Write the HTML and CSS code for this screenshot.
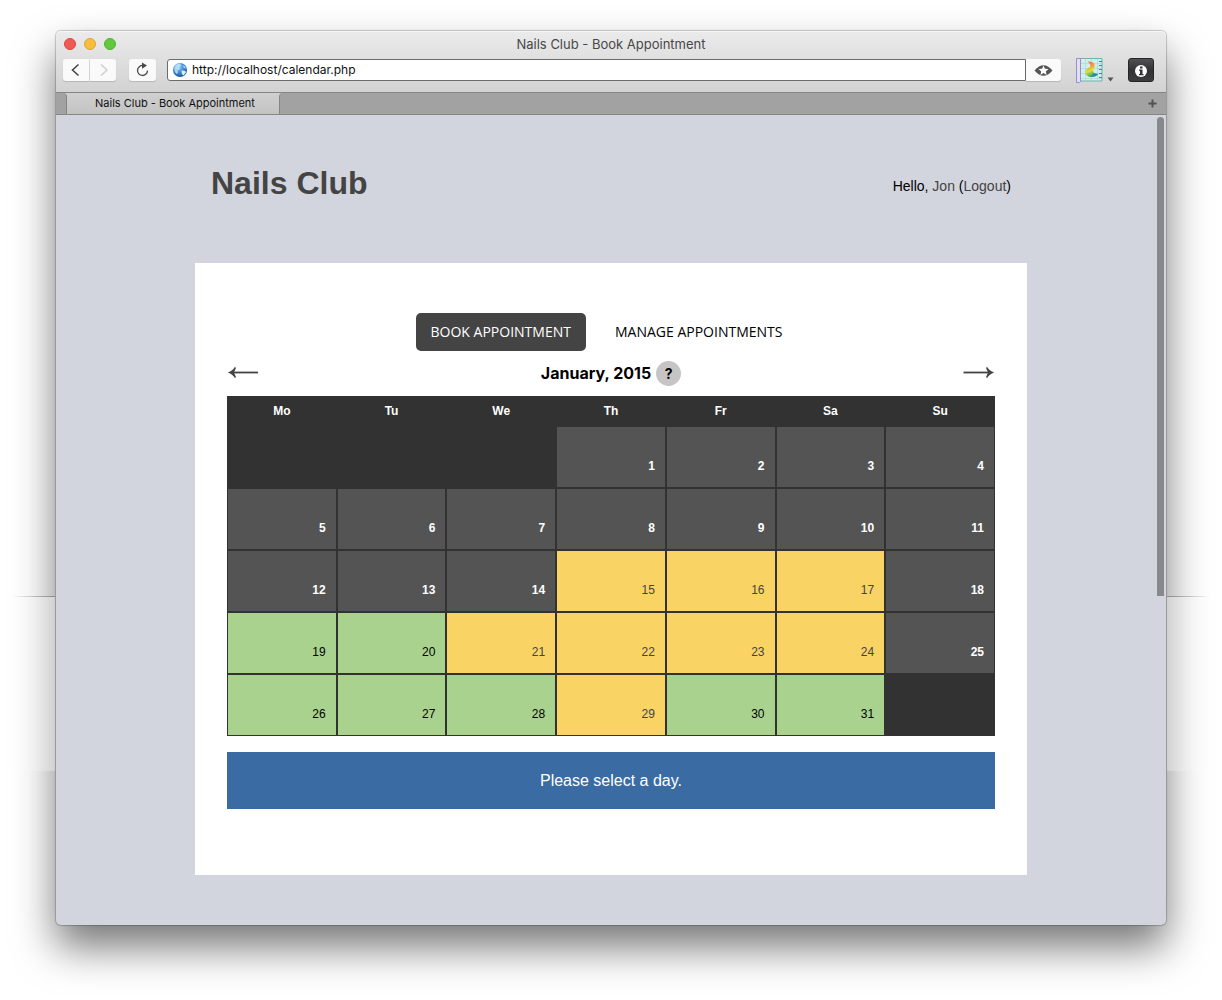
FILE: index.html
```html
<!DOCTYPE html>
<html lang="en">
<head>
<meta charset="utf-8">
<meta name="viewport" content="width=device-width, initial-scale=1">
<title>Nails Club - Book Appointment</title>
<link rel="stylesheet" href="styles.css">
</head>
<body>
<div class="desktop">
  <div class="seam seam-left"></div>
  <div class="seam seam-right"></div>
  <div class="window">
    <header class="chrome">
      <div class="titlebar">
        <div class="lights">
          <button class="light red" type="button" aria-label="Close"></button>
          <button class="light amber" type="button" aria-label="Minimize"></button>
          <button class="light green" type="button" aria-label="Zoom"></button>
        </div>
        <div class="window-title">Nails Club - Book Appointment</div>
      </div>
      <div class="toolbar">
        <div class="history">
          <button class="tool" type="button" aria-label="Back"><svg width="26" height="22" viewBox="0 0 26 22"><path d="M15.500 5.500L9.500 11l6 5.500" fill="none" stroke="#484848" stroke-width="1.600"/></svg></button>
          <button class="tool" type="button" aria-label="Forward"><svg width="26" height="22" viewBox="0 0 26 22"><path d="M11 5.500l6 5.500-6 5.500" fill="none" stroke="#cfcfcf" stroke-width="1.500"/></svg></button>
        </div>
        <button class="tool reload" type="button" aria-label="Reload"><svg width="27" height="22" viewBox="0 0 27 22"><path d="M14 6.500a5 5 0 1 0 4.500 5" fill="none" stroke="#484848" stroke-width="1.300"/><path d="M13 3.500l5 3-5 3.200z" fill="#484848"/></svg></button>
        <div class="address">
          <svg class="globe" width="16" height="16" viewBox="0 0 16 16"><defs><radialGradient id="sea" cx=".4" cy=".3" r=".75"><stop offset="0" stop-color="#8ecbf5"/><stop offset=".55" stop-color="#3a85d2"/><stop offset="1" stop-color="#174c93"/></radialGradient></defs><circle cx="8" cy="8" r="7" fill="url(#sea)"/><path d="M2.500 5C4 2 6 1.300 8 1.500l1.500 2L7.500 5 8 7 5.500 8.500 6 11l-1.500 1C3 10.500 1.800 8 2.500 5z" fill="#c4e5f8" opacity=".8"/><path d="M9.500 8.500l3.500.3 1 1.500L11.500 13.500 9.800 12z" fill="#d9f0fb"/><path d="M11 3l2 1.500.8 2-2-.5z" fill="#a9d7f4"/></svg>
          <input class="url" type="text" aria-label="Address" value="http://localhost/calendar.php">
        </div>
        <button class="tool watch" type="button" aria-label="Site preferences"><svg width="35" height="22" viewBox="0 0 35 22"><path d="M8.500 11.500Q17.500 1 26.500 11.500Q17.500 22 8.500 11.500z" fill="#555"/><path d="M17.500 6.500l1.400 3.300 3.600.3-2.700 2.300.8 3.600-3.100-1.900-3.100 1.900.8-3.600-2.700-2.300 3.600-.3z" fill="#fff"/></svg></button>
        <button class="palette" type="button" aria-label="Tools"><svg width="38" height="28" viewBox="0 0 38 28"><defs><linearGradient id="ink" x1="0" y1="0" x2=".3" y2="1"><stop offset="0" stop-color="#f0584f"/><stop offset=".4" stop-color="#f6a13b"/><stop offset=".65" stop-color="#d9e339"/><stop offset="1" stop-color="#3fa65d"/></linearGradient></defs><path d="M2 2.500h24v22.500H2z" fill="#d0eeea" stroke="#6fb3b1"/><path d="M5 7.500h20M5 12.500h20M5 17.500h20M5 22.500h20M9.500 3v22M15.500 3v22M21.500 3v22" stroke="#a5d6d3" stroke-width=".6"/><path d="M23 5.500h3M23 9.500h3M23 13.500h3M23 17.500h3M23 21.500h3" stroke="#4a838a"/><path d="M11.500 5.500c5-.5 8.500 2.500 7 6-1 2.200-2.500 3.500 0 5.500l3.500 1c-2.500 4-9.500 4-12 .5-2-3 .2-5.500 3-6.700 2.500-1.300 1.500-4.300-1.500-6.300z" fill="url(#ink)"/><path d="M16 20.700l1-3.200 5 .5c-1 1.800-3 2.700-6 2.700z" fill="#2586c4"/><path d="M.5 2.500h4v23l-1 1h-3z" fill="#e4ddf8" stroke="#9a8fc4"/><path d="M31.500 21.500h6l-3 4z" fill="#555"/></svg></button>
        <button class="info" type="button" aria-label="Page info"><svg width="26" height="24" viewBox="0 0 26 24"><circle cx="13" cy="13" r="6" fill="#fff"/><path d="M12 8.500h2.500v2H12zM11 11.500h3.500v4.500h1v1.200h-4.500V16h1v-3.200h-1z" fill="#333"/></svg></button>
      </div>
    </header>
    <nav class="tabstrip" aria-label="Browser tabs">
      <span class="tab-edge"></span>
      <a class="browser-tab" href="#top">Nails Club - Book Appointment</a>
      <div class="tab-rest"><button type="button" aria-label="New tab"><svg width="9" height="9" viewBox="0 0 9 9"><path d="M4.500 0.500v8M0.500 4.500h8" stroke="#525252" stroke-width="2"/></svg></button></div>
    </nav>
    <div class="viewport" id="top">
      <div class="scroll-thumb"></div>
      <div class="page">
        <header class="site-header">
          <h1>Nails Club</h1>
          <p class="greeting">Hello, <a href="#account">Jon</a> (<a href="#logout">Logout</a>)</p>
        </header>
        <main class="card">
          <nav class="sections" aria-label="Appointments">
            <a class="section current" href="#book">BOOK APPOINTMENT</a>
            <a class="section" href="#manage">MANAGE APPOINTMENTS</a>
          </nav>
          <div class="month-bar">
            <a href="#previous" aria-label="Previous month"><svg width="32" height="16" viewBox="0 0 32 16"><path d="M4 7.500h27" stroke="#444" stroke-width="1.800"/><path d="M0.800 7.500C4 6.500 6.500 4.500 7.800 2l1.200.8C8.500 4.500 7.600 6 6.800 7.500c.8 1.500 1.700 3 2.200 4.700l-1.200.8C6.500 10.500 4 8.500 .8 7.500z" fill="#444"/></svg></a>
            <div class="month"><h2>January, 2015</h2><button class="help" type="button" aria-label="Help">?</button></div>
            <a href="#next" aria-label="Next month"><svg width="32" height="16" viewBox="0 0 32 16"><path d="M0.500 7.500H28" stroke="#444" stroke-width="1.800"/><path d="M31.200 7.500C28 6.500 25.500 4.500 24.200 2l-1.200.8C23.500 4.500 24.400 6 25.200 7.500c-.8 1.500-1.700 3-2.200 4.700l1.200.8C25.500 10.500 28 8.500 31.200 7.500z" fill="#444"/></svg></a>
          </div>
          <table class="calendar">
            <thead><tr><th scope="col">Mo</th><th scope="col">Tu</th><th scope="col">We</th><th scope="col">Th</th><th scope="col">Fr</th><th scope="col">Sa</th><th scope="col">Su</th></tr></thead>
            <tbody>
              <tr><td></td><td></td><td></td><td class="past">1</td><td class="past">2</td><td class="past">3</td><td class="past">4</td></tr>
              <tr><td class="past">5</td><td class="past">6</td><td class="past">7</td><td class="past">8</td><td class="past">9</td><td class="past">10</td><td class="past">11</td></tr>
              <tr><td class="past">12</td><td class="past">13</td><td class="past">14</td><td class="busy"><a href="#15">15</a></td><td class="busy"><a href="#16">16</a></td><td class="busy"><a href="#17">17</a></td><td class="past">18</td></tr>
              <tr><td class="free"><a href="#19">19</a></td><td class="free"><a href="#20">20</a></td><td class="busy"><a href="#21">21</a></td><td class="busy"><a href="#22">22</a></td><td class="busy"><a href="#23">23</a></td><td class="busy"><a href="#24">24</a></td><td class="past">25</td></tr>
              <tr><td class="free"><a href="#26">26</a></td><td class="free"><a href="#27">27</a></td><td class="free"><a href="#28">28</a></td><td class="busy"><a href="#29">29</a></td><td class="free"><a href="#30">30</a></td><td class="free"><a href="#31">31</a></td><td></td></tr>
            </tbody>
          </table>
          <p class="notice">Please select a day.</p>
        </main>
      </div>
    </div>
  </div>
</div>
</body>
</html>
```
FILE: styles.css
```css
* { box-sizing: border-box; }
body { margin: 0; background: #fff; font-family: "Liberation Sans", Arial, sans-serif; color: #000; }
a { color: inherit; text-decoration: none; }
button { font: inherit; margin: 0; padding: 0; border: 0; background: none; }
svg { display: block; }

.desktop { position: relative; padding: 31px 56px 75px; overflow: hidden; }
.window {
  border-radius: 5px;
  background: #d2d5dd;
  box-shadow: 0 0 1px 1px rgba(0, 0, 0, .2), 0 22px 42px rgba(0, 0, 0, .54);
}

/* Break in the shadow on either side of the window */
.seam { position: absolute; z-index: 1; top: 596px; width: 42px; height: 175px; border-top: 1px solid; }
.seam-left {
  left: 13px;
  border-image: linear-gradient(to right, transparent, #888) 1;
  background: linear-gradient(to right, transparent, rgba(255, 255, 255, .3));
}
.seam-right {
  right: 13px;
  border-image: linear-gradient(to left, transparent, #888) 1;
  background: linear-gradient(to left, transparent, rgba(255, 255, 255, .3));
}

.chrome {
  padding: 0 12px 8px 7px;
  border-bottom: 1px solid #858585;
  border-radius: 5px 5px 0 0;
  background: linear-gradient(#ebebeb, #d2d2d2);
  box-shadow: inset 0 1px #f6f6f6;
}
.titlebar { display: grid; grid-template-columns: 1fr auto 1fr; align-items: center; height: 25px; margin-right: -5px; }
.lights { display: flex; gap: 8px; padding-left: 1px; }
.light { width: 12px; height: 12px; border: 1px solid; border-radius: 50%; }
.red { background: #ee5b53; border-color: #dc463f; }
.amber { background: #f6be3e; border-color: #dfa434; }
.green { background: #62c93f; border-color: #4eb22d; }
.window-title { grid-column: 2; font: 13px/20px Inter, sans-serif; color: #484848; }
.toolbar { display: flex; align-items: center; height: 28px; }
.tool { display: flex; height: 22px; border-radius: 3px; background: #fafafa; box-shadow: 0 1px 1px rgba(0, 0, 0, .15); }
.history { display: flex; gap: 1px; margin-right: 13px; }
.history .tool:first-child { border-radius: 3px 0 0 3px; }
.history .tool:last-child { border-radius: 0 3px 3px 0; }
.reload { margin-right: 11px; }
.address {
  flex: 1;
  display: flex;
  align-items: center;
  gap: 4px;
  height: 22px;
  padding-left: 4px;
  border: 1px solid #6c6c6c;
  border-radius: 3px 0 0 3px;
  background: #fff;
}
.url { flex: 1; min-width: 0; height: 20px; padding: 0; border: 0; outline: 0; background: none; font: 12px/20px Inter, sans-serif; color: #111; }
.tool.watch { border-radius: 0 3px 3px 0; }
.palette { margin: 0 14px 0 15px; }
.info { border: 1px solid #262626; border-radius: 3px; background: linear-gradient(#515154, #333336 50%, #3c3c40); }
.info svg { margin: -1px; }

.tabstrip { display: flex; height: 22px; border-bottom: 1px solid #868686; background: #d0d0d0; }
.tab-edge { width: 11px; border-right: 1px solid #858585; border-radius: 0 4px 0 0; background: #a2a2a2; }
.browser-tab {
  padding: 0 24px 0 28px;
  background: linear-gradient(#d0d0d0, #c3c3c3);
  font: 11px/21px Inter, sans-serif;
  color: #111;
}
.tab-rest {
  flex: 1;
  display: flex;
  align-items: center;
  justify-content: flex-end;
  padding-right: 9px;
  border-left: 1px solid #858585;
  border-radius: 4px 0 0 0;
  background: #a2a2a2;
}

.viewport { position: relative; padding: 47px 16px 50px; }
.scroll-thumb { position: absolute; top: 2px; right: 2px; width: 7px; height: 479px; border-radius: 4px 4px 0 0; background: #87888c; }
.page { max-width: 832px; margin: 0 auto; }
.site-header { display: flex; align-items: center; justify-content: space-between; padding: 0 16px; margin-bottom: 59px; }
h1 { margin: 0; font-size: 32px; line-height: 42px; color: #444; }
.greeting { margin: 6px 0 0; font-size: 14px; line-height: 20px; }
.greeting a { color: #444; }

.card { padding: 50px 32px 66px; background: #fff; }
.sections { display: flex; justify-content: center; gap: 14px; padding-right: 9px; font: 14px/38px "Open Sans", sans-serif; }
.section { padding: 0 15px; border-radius: 5px; }
.current { background: #444; color: #fff; }
.month-bar { display: flex; align-items: center; justify-content: space-between; height: 44px; margin-bottom: 1px; }
.month { display: flex; align-items: center; gap: 5px; }
h2 { margin: 0; font: bold 16px/24px Inter, sans-serif; }
.help { width: 25px; height: 25px; border-radius: 50%; background: #c6c4c5; font: bold 14px/25px Inter, sans-serif; }

.calendar { width: 100%; table-layout: fixed; border-collapse: separate; border-spacing: 0; background: #323232; font-size: 12px; line-height: 16px; }
.calendar th { height: 30px; padding: 0; color: #fff; }
.calendar td { height: 62px; padding: 0 10px 13px 0; border: 1px solid #323232; text-align: right; vertical-align: bottom; }
.calendar .past { background: #545454; color: #fff; font-weight: bold; }
.calendar .busy { background: #f9d364; color: #444; }
.calendar .free { background: #a8d28e; }
.notice { margin: 16px 0 0; background: #3a6ca3; color: #fff; font-size: 16px; line-height: 57px; text-align: center; }
```
